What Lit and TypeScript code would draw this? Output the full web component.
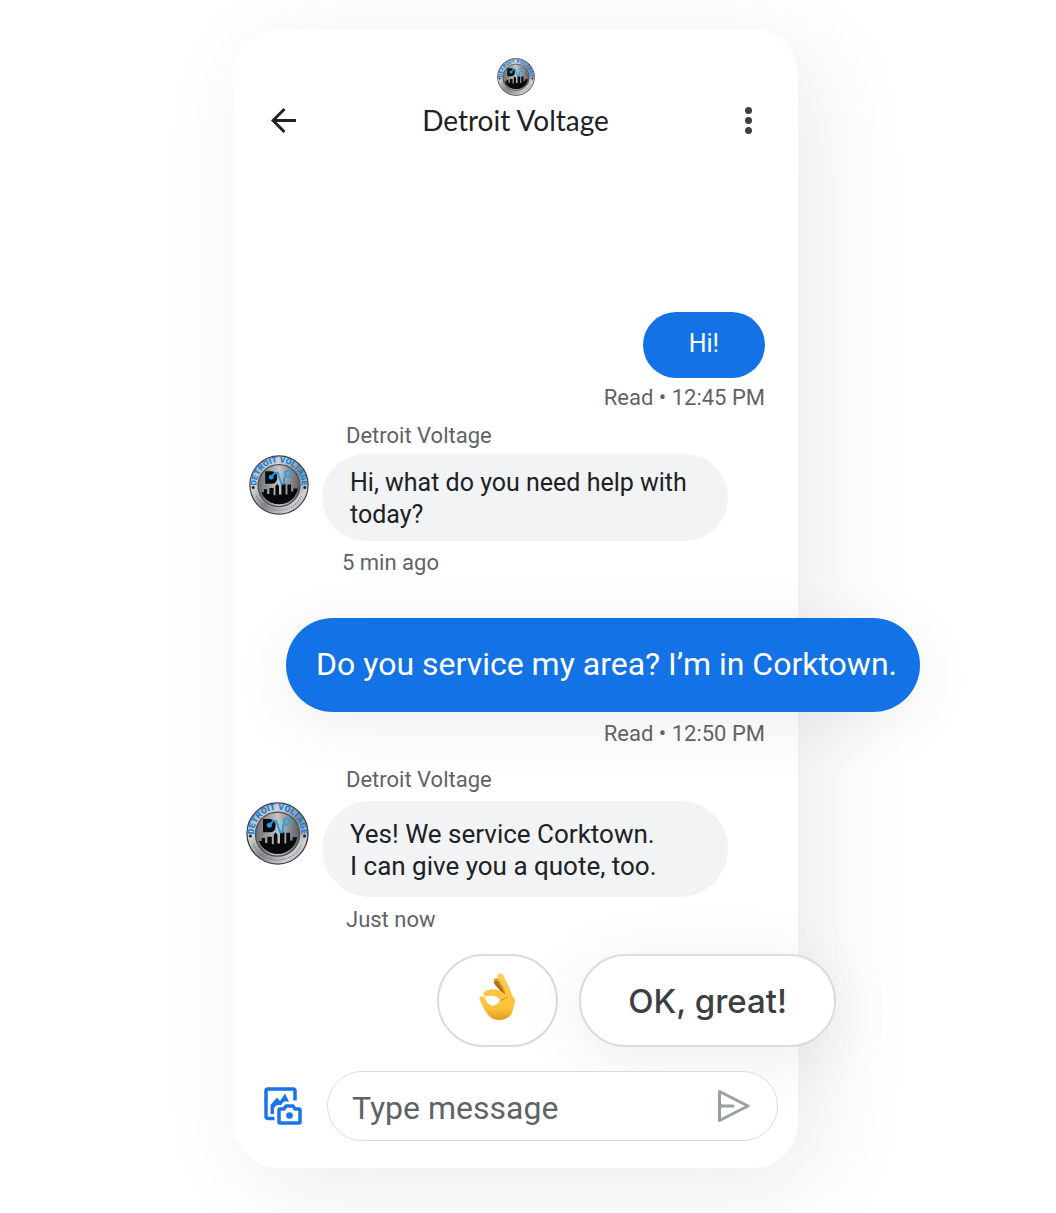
import { LitElement, html, svg, css } from "lit";
import { customElement, property } from "lit/decorators.js";

@customElement("brand-badge")
export class BrandBadge extends LitElement {
  static styles = css`
    :host { display: block; }
    .badge { display: block; width: 100%; height: auto; }
    .ring-text { font-family: "Roboto", sans-serif; font-weight: 900; font-size: 14px; fill: #147fdc; }
  `;
  render() {
    return html`<svg class="badge" viewBox="0 0 100 100" role="img" aria-label="Detroit Voltage logo">
      <defs>
        <linearGradient id="rim" x1="0" y1="0" x2="1" y2="1">
          <stop offset="0" stop-color="#8b8d90" /><stop offset=".3" stop-color="#d3d5d8" />
          <stop offset=".55" stop-color="#85878a" /><stop offset=".8" stop-color="#d0d2d4" /><stop offset="1" stop-color="#7a7c7f" />
        </linearGradient>
        <linearGradient id="plate" x1="0" y1="0" x2="1" y2="0">
          <stop offset="0" stop-color="#6a6c6e" /><stop offset=".5" stop-color="#c4c5c7" /><stop offset="1" stop-color="#5c5d5f" />
        </linearGradient>
        <path id="arc" d="M13 56 A37.500 37.500 0 1 1 87 56" />
        <clipPath id="inner"><circle cx="50" cy="50" r="32" /></clipPath>
      </defs>
      <circle cx="50" cy="50" r="48.500" fill="url(#rim)" stroke="#3b3d40" stroke-width="2" />
      <circle cx="50" cy="51" r="35" fill="url(#plate)" stroke="#4c4e51" stroke-width="2" />
      <g clip-path="url(#inner)">
        <path d="M18 62h7v-5h5v8h4V55h7v12h3V52l3-4 3 4v14h4V48h7v18h3V49h6v12h4V56h8v30H18z" fill="#08090a" />
        <path d="M20 68h60v18H20z" fill="#08090a" />
      </g>
      <path d="M27 27h10q10 0 10 10.500T37 48H27z" fill="#08090a" />
      <circle cx="37" cy="37" r="4" fill="#1f9be8" />
      <path d="M37 37l6-7h5l6 18h4l1-12" fill="none" stroke="#1f9be8" stroke-width="3" />
      <circle cx="65" cy="31" r="5" fill="none" stroke="#2aa0e6" stroke-width="3" />
      <circle cx="7" cy="54" r="2.500" fill="#222" /><circle cx="93" cy="54" r="2.500" fill="#222" />
      <text class="ring-text" text-anchor="middle"><textPath href="#arc" startOffset="50%">DETROIT VOLTAGE</textPath></text>
      <path d="M12 68 A42 42 0 0 0 88 68" fill="none" stroke="#77797c" stroke-width="2" stroke-dasharray="2 2" />
    </svg>`;
  }
}

@customElement("chat-message")
export class ChatMessage extends LitElement {
  @property() kind = "in";
  @property() sender = "";
  @property() time = "";
  @property({ type: Array }) lines: string[] = [];

  static styles = css`
    :host { display: block; font-family: "Roboto", sans-serif; }
    .row { display: grid; grid-template-columns: 60px minmax(0, 406px); column-gap: 13px; row-gap: 6px; padding-left: 16px; }
    .row.tall { grid-template-columns: 63px minmax(0, 406px); row-gap: 9px; padding-left: 13px; }
    .sender, .meta { color: #5f6368; font-size: 22px; line-height: 24px; }
    .sender { grid-column: 2; padding-left: 24px; }
    .below { grid-column: 2; padding-left: 20px; margin-top: 4px; }
    .tall .below { padding-left: 24px; margin-top: 2px; }
    .avatar { margin-top: 1px; }
    .bubble { border-radius: 48px; font-size: 25px; line-height: 32px; }
    .theirs { background: #f1f3f4; color: #202124; padding: 13px 28px 10px; }
    .tall .theirs { padding: 17px 28px 15px; font-size: 26px; }
    .sent { display: flex; flex-direction: column; align-items: flex-end; padding-right: 33px; gap: 8px; }
    .sent.focus { gap: 10px; }
    .mine { background: #1373e6; color: #fff; padding: 16px 46px 18px; }
    .focus .mine { font-size: 32px; line-height: 40px; padding: 26px 23px 28px 30px; margin-right: -155px; white-space: nowrap;
      box-shadow: 0 12px 64px rgba(0, 0, 0, 0.07); }
  `;
  render() {
    const text = this.lines.map((l, i) => (i ? html`<br />${l}` : l));
    if (this.kind === "in" || this.kind === "tall") {
      return html`<div class="row ${this.kind === "tall" ? "tall" : ""}">
        <div class="sender">${this.sender}</div>
        <brand-badge class="avatar"></brand-badge>
        <div class="bubble theirs">${text}</div>
        <div class="meta below">${this.time}</div>
      </div>`;
    }
    return html`<div class="sent ${this.kind === "focus" ? "focus" : ""}">
      <div class="bubble mine">${text}</div>
      <div class="meta">Read • ${this.time}</div>
    </div>`;
  }
}

const okHand = svg`
  <defs>
    <linearGradient id="skin" x1="0" y1="0" x2="0" y2="1">
      <stop offset="0" stop-color="#ffcb4d" /><stop offset=".75" stop-color="#fcc23a" /><stop offset="1" stop-color="#e39a22" />
    </linearGradient>
  </defs>
  <path d="M15 7c1-2 4-2 5 0l7 11-2 6-5-8c-3-3-6-6-5-9z" fill="#a8701a" />
  <path d="M16 8c1-2 3-1 4 1l6 10" fill="none" stroke="#f0b02f" stroke-width="1.500" stroke-linecap="round" />
  <path fill-rule="evenodd" fill="url(#skin)" d="M18.500 4C17.500 0 22.500-.5 24 2l6 12 3 8c2 3 3.500 4 3 7l-3 11c-2 4-7 7-13 7-6 0-10-3-13-8C4 35 2 30 .5 26c-1-3 4-4 5.500-1 1 3 3 7 8 8 3-1 6-3 7.500-5.500-1.500-2.500-4-4-7-4.500-3-.5-6 .5-8 0-3-.5-3-4 0-5 5-2 11-2.500 15 0l5 3.500c0-3-1-5-2-7z" />
  <path d="M19 7c2 5 5 7 6.500 14M21 28c2-2 5-2 7-4" fill="none" stroke="#d78f1e" stroke-width="1" stroke-linecap="round" />`;

@customElement("app-root")
export class AppRoot extends LitElement {
  static styles = css`
    :host { display: block; min-height: 100vh; background: #fff; font-family: "Roboto", sans-serif; overflow: hidden; }
    * { box-sizing: border-box; }
    button { border: 0; background: none; padding: 0; font: inherit; color: inherit; cursor: pointer; }
    svg { display: block; }
    .page { display: flex; justify-content: center; padding: 29px 25px 45px 0; }
    .phone { width: 100%; max-width: 565px; background: #fff; border-radius: 46px; padding: 29px 0 27px;
      box-shadow: 20px 20px 100px rgba(0, 0, 0, 0.08); }
    .header { display: grid; grid-template-columns: 1fr auto 1fr; row-gap: 8px; align-items: center; padding: 0 38px; }
    .logo { grid-column: 2; width: 38px; justify-self: center; }
    .back { grid-column: 1; }
    .title { margin: 0; font-family: "Lato", sans-serif; font-weight: 400; font-size: 28px; line-height: 32px; color: #202124; }
    .more { justify-self: end; }
    .log { display: flex; flex-direction: column; padding-top: 176px; }
    .reply { margin-top: 14px; }
    .question { margin-top: 43px; }
    .answer { margin-top: 22px; }
    .chips { display: flex; justify-content: flex-end; gap: 21px; margin: 22px -38px 0 0; }
    .chip { height: 93px; border: 2px solid #dadce0; border-radius: 48px; background: #fff; display: grid; place-items: center; }
    .hand { padding: 0 40px 8px; }
    .great { padding: 0 47px; font-family: "Inter", sans-serif; font-size: 33px; font-weight: 500; color: #3c4043; box-shadow: 0 12px 70px rgba(0, 0, 0, 0.08); }
    .composer { display: flex; align-items: center; margin: 24px 20px 0 31px; gap: 24px; }
    .field { flex: 1; min-width: 0; height: 70px; display: flex; align-items: center; border: 1px solid #dadce0; border-radius: 35px;
      padding: 0 27px 0 24px; background: #fff; }
    .input { flex: 1; min-width: 0; border: 0; outline: 0; background: none; padding: 4px 0 0; font: 400 32px/40px "Roboto", sans-serif; color: #202124; }
    .input::placeholder { color: #5f6368; opacity: 1; }
  `;
  render() {
    return html`<main class="page"><section class="phone">
      <header class="header">
        <brand-badge class="logo"></brand-badge>
        <button class="back" aria-label="Back"><svg width="26" height="26" viewBox="0 0 26 26" fill="none" stroke="#202124" stroke-width="3"><path d="M25 13.500H2.500M13.500 2L2 13.500 13.500 25" /></svg></button>
        <h1 class="title">Detroit Voltage</h1>
        <button class="more" aria-label="More options"><svg width="24" height="28" viewBox="0 0 24 28" fill="#3c4043"><circle cx="12.500" cy="4.500" r="3.500" /><circle cx="12.500" cy="14.500" r="3.500" /><circle cx="12.500" cy="24.500" r="3.500" /></svg></button>
      </header>
      <div class="log">
        <chat-message kind="out" .lines=${["Hi!"]} time="12:45 PM"></chat-message>
        <chat-message class="reply" kind="in" sender="Detroit Voltage" .lines=${["Hi, what do you need help with today?"]} time="5 min ago"></chat-message>
        <chat-message class="question" kind="focus" .lines=${["Do you service my area? I’m in Corktown."]} time="12:50 PM"></chat-message>
        <chat-message class="answer" kind="tall" sender="Detroit Voltage" .lines=${["Yes! We service Corktown.", "I can give you a quote, too."]} time="Just now"></chat-message>
      </div>
      <div class="chips">
        <button class="chip hand" aria-label="OK hand"><svg width="37" height="48" viewBox="0 0 37 48">${okHand}</svg></button>
        <button class="chip great">OK, great!</button>
      </div>
      <form class="composer" @submit=${(e: Event) => e.preventDefault()}>
        <button type="button" aria-label="Add photo"><svg width="39" height="39" viewBox="0 0 39 39" fill="none" stroke="#1a73e8" stroke-width="3.500" stroke-linejoin="round">
          <path d="M10.500 31.500H4a2 2 0 0 1-2-2V4a2 2 0 0 1 2-2h25a2 2 0 0 1 2 2v9.500" />
          <path d="M6.500 27v-9L13 10.500l3 3.500 5-7.500 4 8h-5l-3 3.500h-4l-3 3v6z" fill="#1a73e8" stroke="none" />
          <path d="M16 22h4l2-3h7l2 3h4a1 1 0 0 1 1 1v12a1 1 0 0 1-1 1H16a1 1 0 0 1-1-1V23a1 1 0 0 1 1-1z" />
          <circle cx="25.500" cy="28.500" r="3.300" fill="#1a73e8" stroke="none" />
        </svg></button>
        <div class="field">
          <input class="input" type="text" placeholder="Type message" aria-label="Type message" />
          <button aria-label="Send"><svg width="33" height="34" viewBox="0 0 33 34" fill="none" stroke="#9aa0a6" stroke-width="3" stroke-linejoin="round" stroke-linecap="round"><path d="M2.500 2.500v29L31 17zM3 17h13" /><path d="M3 12q1 4 5 5-4 1-5 5z" fill="#9aa0a6" stroke="none" /></svg></button>
        </div>
      </form>
    </section></main>`;
  }
}
